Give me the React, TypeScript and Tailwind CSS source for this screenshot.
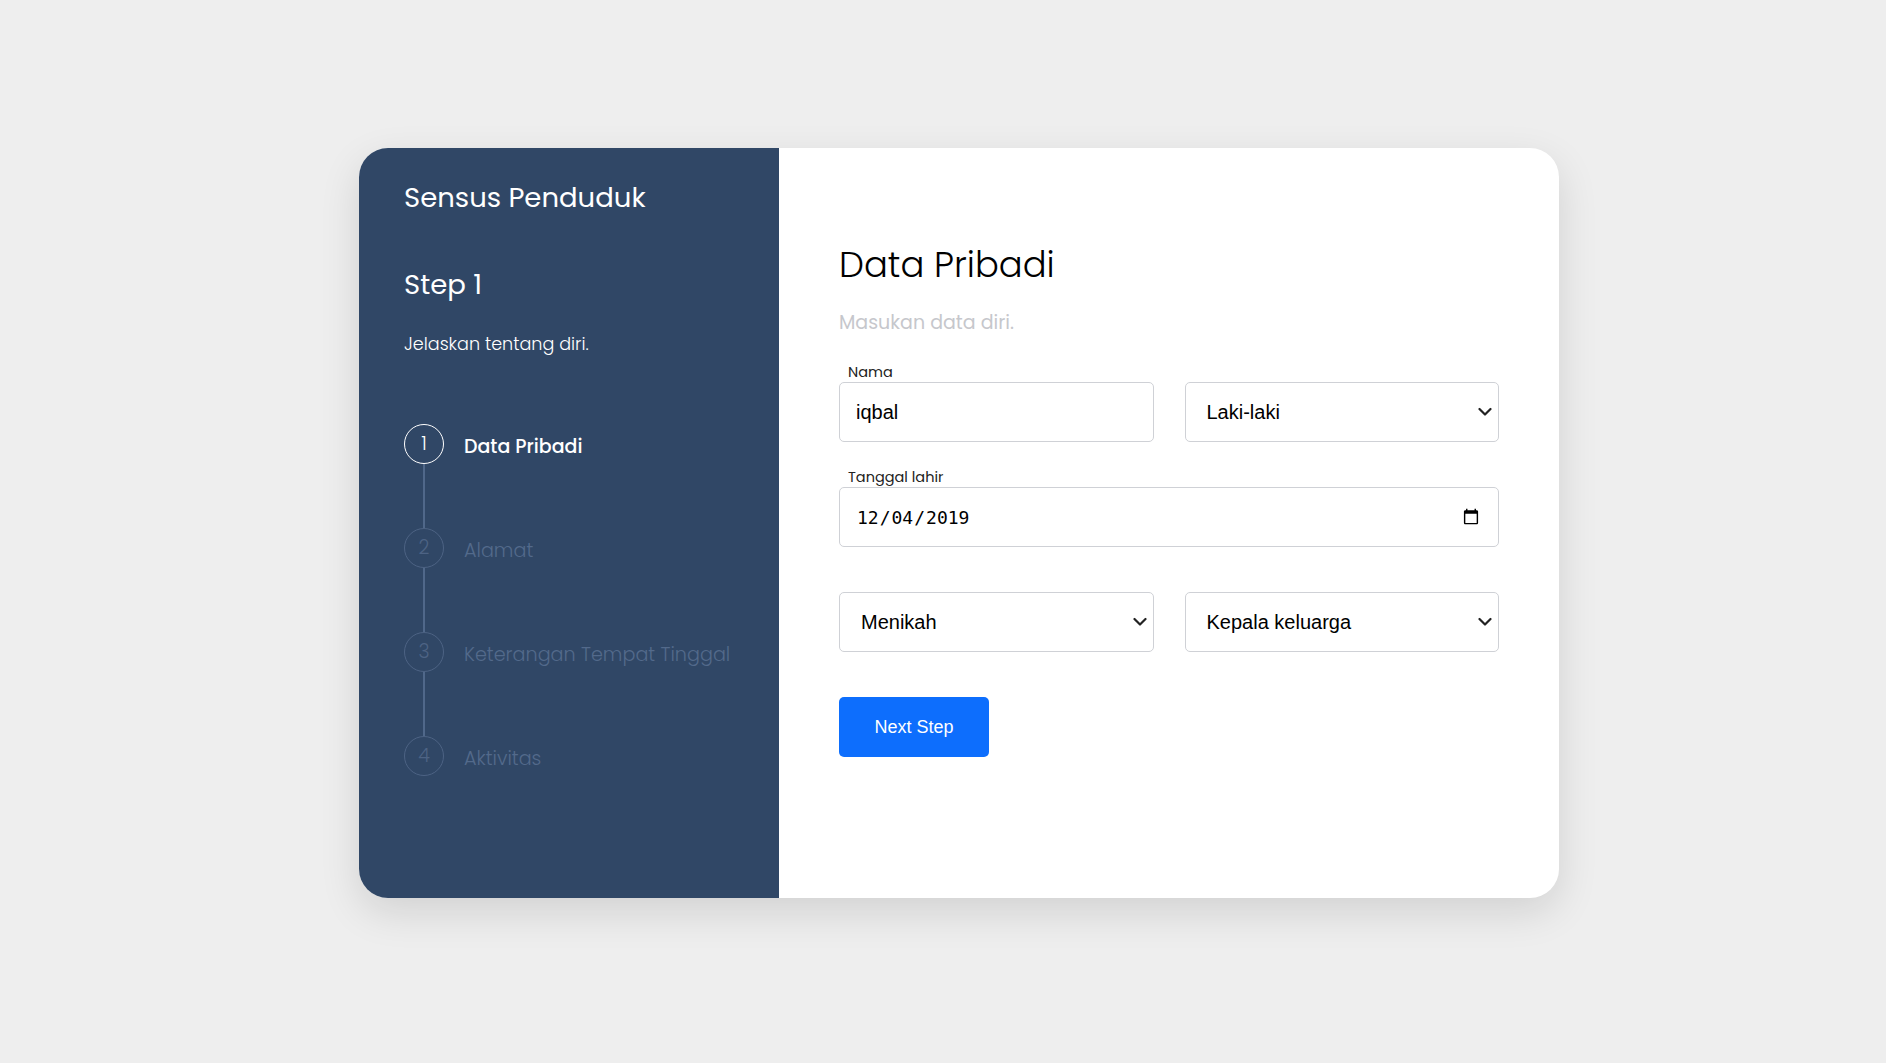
import React from "react";

const steps = [
  { n: 1, label: "Data Pribadi", active: true },
  { n: 2, label: "Alamat", active: false },
  { n: 3, label: "Keterangan Tempat Tinggal", active: false },
  { n: 4, label: "Aktivitas", active: false },
];

function Chevron() {
  return (
    <svg
      className="pointer-events-none absolute right-[7px] top-1/2 -translate-y-1/2"
      width="14"
      height="9"
      viewBox="0 0 14 9"
      fill="none"
    >
      <path d="M1.5 1.5 L7 7 L12.5 1.5" stroke="#222" strokeWidth="2.2" strokeLinecap="round" strokeLinejoin="round" />
    </svg>
  );
}

function Select({ value, options }: { value: string; options: string[] }) {
  return (
    <div className="relative">
      <select
        defaultValue={value}
        className="h-[60px] w-full appearance-none rounded-[5px] border border-[#cfd1d6] bg-white pl-[21px] pr-[28px] font-['Liberation_Sans',Arial,sans-serif] text-[20px] text-black outline-none"
      >
        {options.map((o) => (
          <option key={o} value={o}>
            {o}
          </option>
        ))}
      </select>
      <Chevron />
    </div>
  );
}

export default function App() {
  return (
    <div className="min-h-[1063px] w-full bg-[#eeeeee] pl-[359px] pt-[148px] font-['Poppins','Inter',sans-serif]">
      <div className="flex h-[750px] w-[1200px] overflow-hidden rounded-[29px] bg-white shadow-[0_14px_40px_rgba(0,0,0,0.12)]">
        {/* Left panel */}
        <div className="w-[420px] shrink-0 bg-[#304766] pl-[45px] pt-[32px]">
          <div className="text-[27.5px] leading-[36px] font-normal text-white">Sensus Penduduk</div>
          <div className="mt-[51px] text-[27.5px] leading-[36px] font-normal text-white">Step 1</div>
          <div className="mt-[27px] text-[17.6px] leading-[28px] font-light text-white">Jelaskan tentang diri.</div>
          <div className="mt-[66px] flex flex-col">
            {steps.map((s, i) => (
              <div key={s.n} className="flex flex-col">
                <div className="flex items-center gap-[20px]">
                  <div
                    className={
                      s.active
                        ? "flex h-[40px] w-[40px] items-center justify-center rounded-full border border-white text-[19px] font-light text-white"
                        : "flex h-[40px] w-[40px] items-center justify-center rounded-full border border-[#4d6384] text-[19px] font-light text-[#4d6384]"
                    }
                  >
                    {s.n}
                  </div>
                  <div
                    className={
                      s.active
                        ? "pt-[6px] text-[19px] leading-[28px] font-medium text-white"
                        : "pt-[6px] text-[19.2px] leading-[28px] font-light text-[#536a8b]"
                    }
                  >
                    {s.label}
                  </div>
                </div>
                {i < steps.length - 1 && <div className="ml-[19px] h-[64px] w-[2px] bg-[#50688a]" />}
              </div>
            ))}
          </div>
        </div>

        {/* Right panel */}
        <div className="flex-1 px-[60px] pt-[95px]">
          <div className="text-[35.4px] leading-[44px] font-light text-black">Data Pribadi</div>
          <div className="mt-[22px] text-[19px] leading-[28px] font-normal text-[#c6c7cc]">Masukan data diri.</div>

          <div className="mt-[25px] grid grid-cols-2 gap-x-[31px] gap-y-[25px]">
            <div className="flex flex-col">
              <label className="h-[20px] pl-[9px] text-[14.5px] leading-[20px] text-[#222]">Nama</label>
              <input
                defaultValue="iqbal"
                className="h-[60px] w-full rounded-[5px] border border-[#cfd1d6] bg-white px-[16px] font-['Liberation_Sans',Arial,sans-serif] text-[20px] text-black outline-none"
              />
            </div>
            <div className="flex flex-col">
              <div className="h-[20px]" />
              <Select value="Laki-laki" options={["Laki-laki", "Perempuan"]} />
            </div>

            <div className="col-span-2 flex flex-col">
              <label className="h-[20px] pl-[9px] text-[14.5px] leading-[20px] text-[#222]">Tanggal lahir</label>
              <input
                type="date"
                defaultValue="2019-12-04"
                className="h-[60px] w-full rounded-[5px] border border-[#cfd1d6] bg-white px-[16px] font-['DejaVu_Sans_Mono',monospace] text-[18px] text-black outline-none"
              />
            </div>

            <div className="flex flex-col">
              <div className="h-[20px]" />
              <Select value="Menikah" options={["Menikah", "Belum menikah"]} />
            </div>
            <div className="flex flex-col">
              <div className="h-[20px]" />
              <Select value="Kepala keluarga" options={["Kepala keluarga", "Anggota keluarga"]} />
            </div>
          </div>

          <button className="mt-[45px] h-[60px] w-[150px] rounded-[5px] bg-[#0d6efd] font-['Liberation_Sans',Arial,sans-serif] text-[18px] text-white">
            Next Step
          </button>
        </div>
      </div>
    </div>
  );
}
